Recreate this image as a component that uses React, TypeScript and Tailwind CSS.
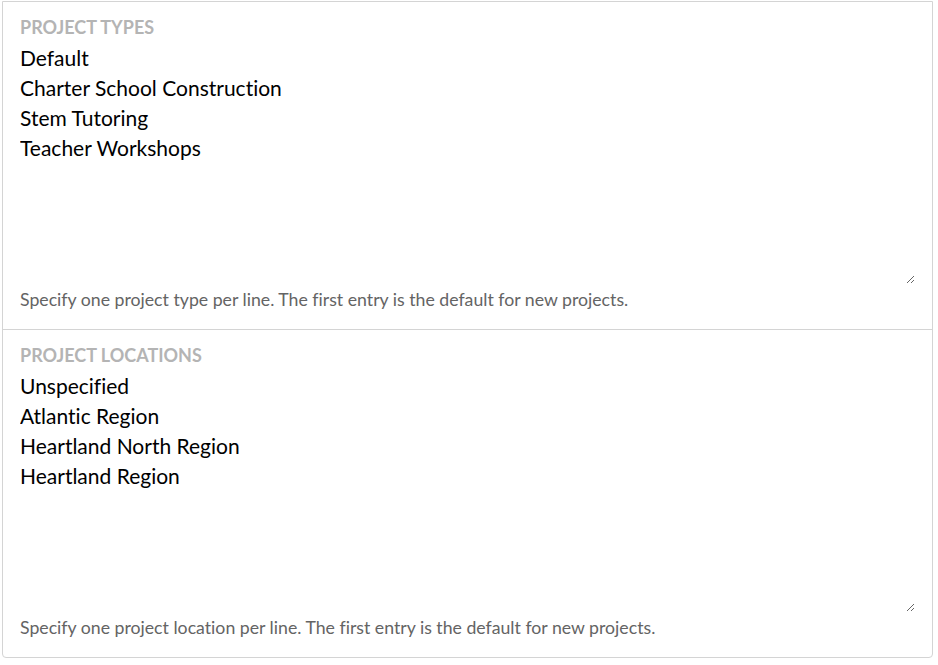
import React from 'react';

interface ListFieldProps {
  label: string;
  items: string[];
  help: string;
  last?: boolean;
}

const ListField: React.FC<ListFieldProps> = ({ label, items, help, last }) => (
  <div className={`px-[17px] pt-[15px] pb-[19px] ${last ? '' : 'border-b border-[#d4d4d4]'}`}>
    <label className="block text-[18px] leading-[20px] font-bold uppercase text-[#b4b4b4]">
      {label}
    </label>
    <textarea
      defaultValue={items.join('\n')}
      spellCheck={false}
      className="block w-full h-[241px] mt-[6px] text-[21px] leading-[30px] text-black bg-white border-0 outline-none resize-y p-0"
    />
    <p className="mt-[6px] text-[17.7px] leading-[20px] text-[#646464]">{help}</p>
  </div>
);

export default function App() {
  return (
    <div className="min-h-screen bg-white pt-[1px] pl-[2px] font-['Lato',sans-serif] [font-variant-ligatures:none]">
      <div className="w-[931px] border border-[#d4d4d4] rounded-b-[4px] bg-white">
        {/* Project types */}
        <ListField
          label="Project Types"
          items={['Default', 'Charter School Construction', 'Stem Tutoring', 'Teacher Workshops']}
          help="Specify one project type per line. The first entry is the default for new projects."
        />
        {/* Project locations */}
        <ListField
          label="Project Locations"
          items={['Unspecified', 'Atlantic Region', 'Heartland North Region', 'Heartland Region']}
          help="Specify one project location per line. The first entry is the default for new projects."
          last
        />
      </div>
    </div>
  );
}
